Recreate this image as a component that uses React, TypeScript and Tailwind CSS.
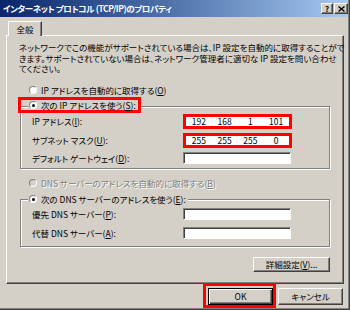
import clsx from "clsx";

const FONT = "font-['Noto_Sans_CJK_JP','Noto_Sans_CJK_SC',sans-serif] [font-feature-settings:'palt']";
const ETCHED = "border border-[#808080] shadow-[inset_1px_1px_0_#fff,1px_1px_0_#fff]";
const SUNKEN =
  "border border-t-[#808080] border-l-[#808080] border-b-white border-r-white bg-white shadow-[inset_1px_1px_0_#404040]";
const RAISED =
  "border border-t-white border-l-white border-r-[#404040] border-b-[#404040] bg-[#d4d0c8] shadow-[inset_-1px_-1px_0_#808080]";

function Radio({ checked, disabled }: { checked?: boolean; disabled?: boolean }) {
  return (
    <span
      className={clsx(
        "flex h-[8px] w-[8px] shrink-0 items-center justify-center rounded-full border border-t-[#808080] border-l-[#808080] border-b-white border-r-white",
        disabled ? "bg-[#d4d0c8]" : "bg-white",
      )}
    >
      {checked && <span className="h-[3px] w-[3px] rounded-full bg-black" />}
    </span>
  );
}

function Key({ k }: { k: string }) {
  return <span className="underline underline-offset-[1px]">{k}</span>;
}

function IpField({ parts }: { parts: string[] }) {
  return (
    <div className="grid h-[15px] w-[109px] grid-cols-4 items-center border-[3px] border-[#f00] bg-white">
      {parts.map((p, i) => (
        <span key={i} className="text-center leading-[9px]">
          {p}
        </span>
      ))}
    </div>
  );
}

function FieldRow({ label, children, h }: { label: React.ReactNode; children: React.ReactNode; h: string }) {
  return (
    <div className={clsx("flex items-center", h)}>
      <span className="w-[151px] whitespace-nowrap">{label}</span>
      {children}
    </div>
  );
}

export default function App() {
  return (
    <div
      className={clsx(
        "relative flex h-[310px] w-[350px] flex-col overflow-hidden border-r border-b border-r-[#404040] border-b-[#404040] bg-[#d4d0c8] text-[8.5px] text-black shadow-[inset_-1px_-1px_0_#808080]",
        FONT,
      )}
    >
      {/* title bar */}
      <div className="flex h-[17px] w-[348px] shrink-0 items-center bg-linear-to-r from-[#0a246a] to-[#a6caf0] pl-[3px]">
        <span className="whitespace-nowrap font-bold tracking-[-0.4px] text-white">インターネット プロトコル (TCP/IP)のプロパティ</span>
        <div className="ml-auto flex gap-[1px]">
          <div className={clsx("flex h-[11px] w-[12px] items-center justify-center text-[8px] font-bold leading-none", RAISED)}>?</div>
          <div className={clsx("flex h-[11px] w-[14px] items-center justify-center", RAISED)}>
            <svg width="7" height="6" viewBox="0 0 7 6">
              <path d="M0.5 0.5 L6.5 5.5 M6.5 0.5 L0.5 5.5" stroke="#000" strokeWidth="1.4" />
            </svg>
          </div>
        </div>
      </div>

      {/* tab */}
      <div className="mt-[4px] flex shrink-0">
        <div className="relative z-10 -mb-px ml-[8px] flex h-[15px] w-[34px] items-center justify-center border-t border-l border-r border-t-white border-l-white border-r-[#404040] bg-[#d4d0c8] shadow-[inset_-1px_0_0_#808080]">
          全般
        </div>
      </div>

      {/* tab panel */}
      <div className="ml-[6px] flex h-[249px] w-[338px] shrink-0 flex-col border border-t-white border-l-white border-r-[#404040] border-b-[#404040] shadow-[inset_-1px_-1px_0_#808080]">
        <p className="ml-[12px] mt-[6px] whitespace-nowrap leading-[10.5px]">
          ネットワークでこの機能がサポートされている場合は、IP 設定を自動的に取得することがで
          <br />
          きます。サポートされていない場合は、ネットワーク管理者に適切な IP 設定を問い合わせ
          <br />
          てください。
        </p>

        <div className="ml-[22px] mt-[9.5px] flex h-[14px] items-center gap-[4px]">
          <Radio />
          <span className="whitespace-nowrap">
            IP アドレスを自動的に取得する(<Key k="O" />)
          </span>
        </div>

        <div className="relative z-10 ml-[11px] h-[16px] w-[123px] border-[3px] border-[#f00]">
          <div className="ml-[7px] flex h-full w-fit items-center gap-[4px] bg-[#d4d0c8] pl-[1px] pr-[2px]">
            <Radio checked />
            <span className="whitespace-nowrap">
              次の IP アドレスを使う(<Key k="S" />):
            </span>
          </div>
        </div>

        <div className={clsx("ml-[13px] -mt-[7px] flex h-[63px] w-[310px] flex-col gap-[4px] pl-[11px] pt-[7px]", ETCHED)}>
          <FieldRow h="h-[15px]" label={<>IP アドレス(<Key k="I" />):</>}>
            <IpField parts={["192", "168", "1", "101"]} />
          </FieldRow>
          <FieldRow h="h-[15px]" label={<>サブネット マスク(<Key k="U" />):</>}>
            <IpField parts={["255", "255", "255", "0"]} />
          </FieldRow>
          <FieldRow h="h-[12px]" label={<>デフォルト ゲートウェイ(<Key k="D" />):</>}>
            <div className={clsx("h-[12px] w-[108px]", SUNKEN)} />
          </FieldRow>
        </div>

        <div className="ml-[22px] mt-[7px] flex h-[14px] items-center gap-[4px]">
          <Radio disabled />
          <span className="whitespace-nowrap text-[#808080] [text-shadow:1px_1px_0_#fff]">
            DNS サーバーのアドレスを自動的に取得する(<Key k="B" />)
          </span>
        </div>

        <div className="relative z-10 mt-[2px] flex h-[14px]">
          <div className="ml-[21px] flex h-full items-center gap-[4px] bg-[#d4d0c8] pl-[1px] pr-[2px]">
            <Radio checked />
            <span className="whitespace-nowrap">
              次の DNS サーバーのアドレスを使う(<Key k="E" />):
            </span>
          </div>
        </div>

        <div className={clsx("ml-[13px] -mt-[7px] flex h-[48px] w-[310px] flex-col gap-[7px] pl-[11px] pt-[8px]", ETCHED)}>
          <FieldRow h="h-[12px]" label={<>優先 DNS サーバー(<Key k="P" />):</>}>
            <div className={clsx("h-[12px] w-[108px]", SUNKEN)} />
          </FieldRow>
          <FieldRow h="h-[12px]" label={<>代替 DNS サーバー(<Key k="A" />):</>}>
            <div className={clsx("h-[12px] w-[108px]", SUNKEN)} />
          </FieldRow>
        </div>

        <button
          type="button"
          className={clsx("ml-[246px] mt-[10px] flex h-[15px] w-[77px] items-center justify-center leading-none", RAISED)}
        >
          詳細設定(<Key k="V" />)...
        </button>
      </div>

      {/* dialog buttons */}
      <div className="-mt-px ml-[203px] flex items-start">
        <div className="relative h-[25px] w-[73px] border-[3px] border-[#f00] pl-[2px] pt-[2px]">
          <button
            type="button"
            className="flex h-[17px] w-[65px] items-center justify-center border border-black bg-[#d4d0c8] leading-none shadow-[inset_1px_1px_0_#fff,inset_-1px_-1px_0_#404040,inset_-2px_-2px_0_#808080]"
          >
            OK
          </button>
        </div>
        <button
          type="button"
          className={clsx("ml-[2px] mt-[5px] flex h-[17px] w-[65px] items-center justify-center leading-none", RAISED)}
        >
          キャンセル
        </button>
      </div>
    </div>
  );
}
